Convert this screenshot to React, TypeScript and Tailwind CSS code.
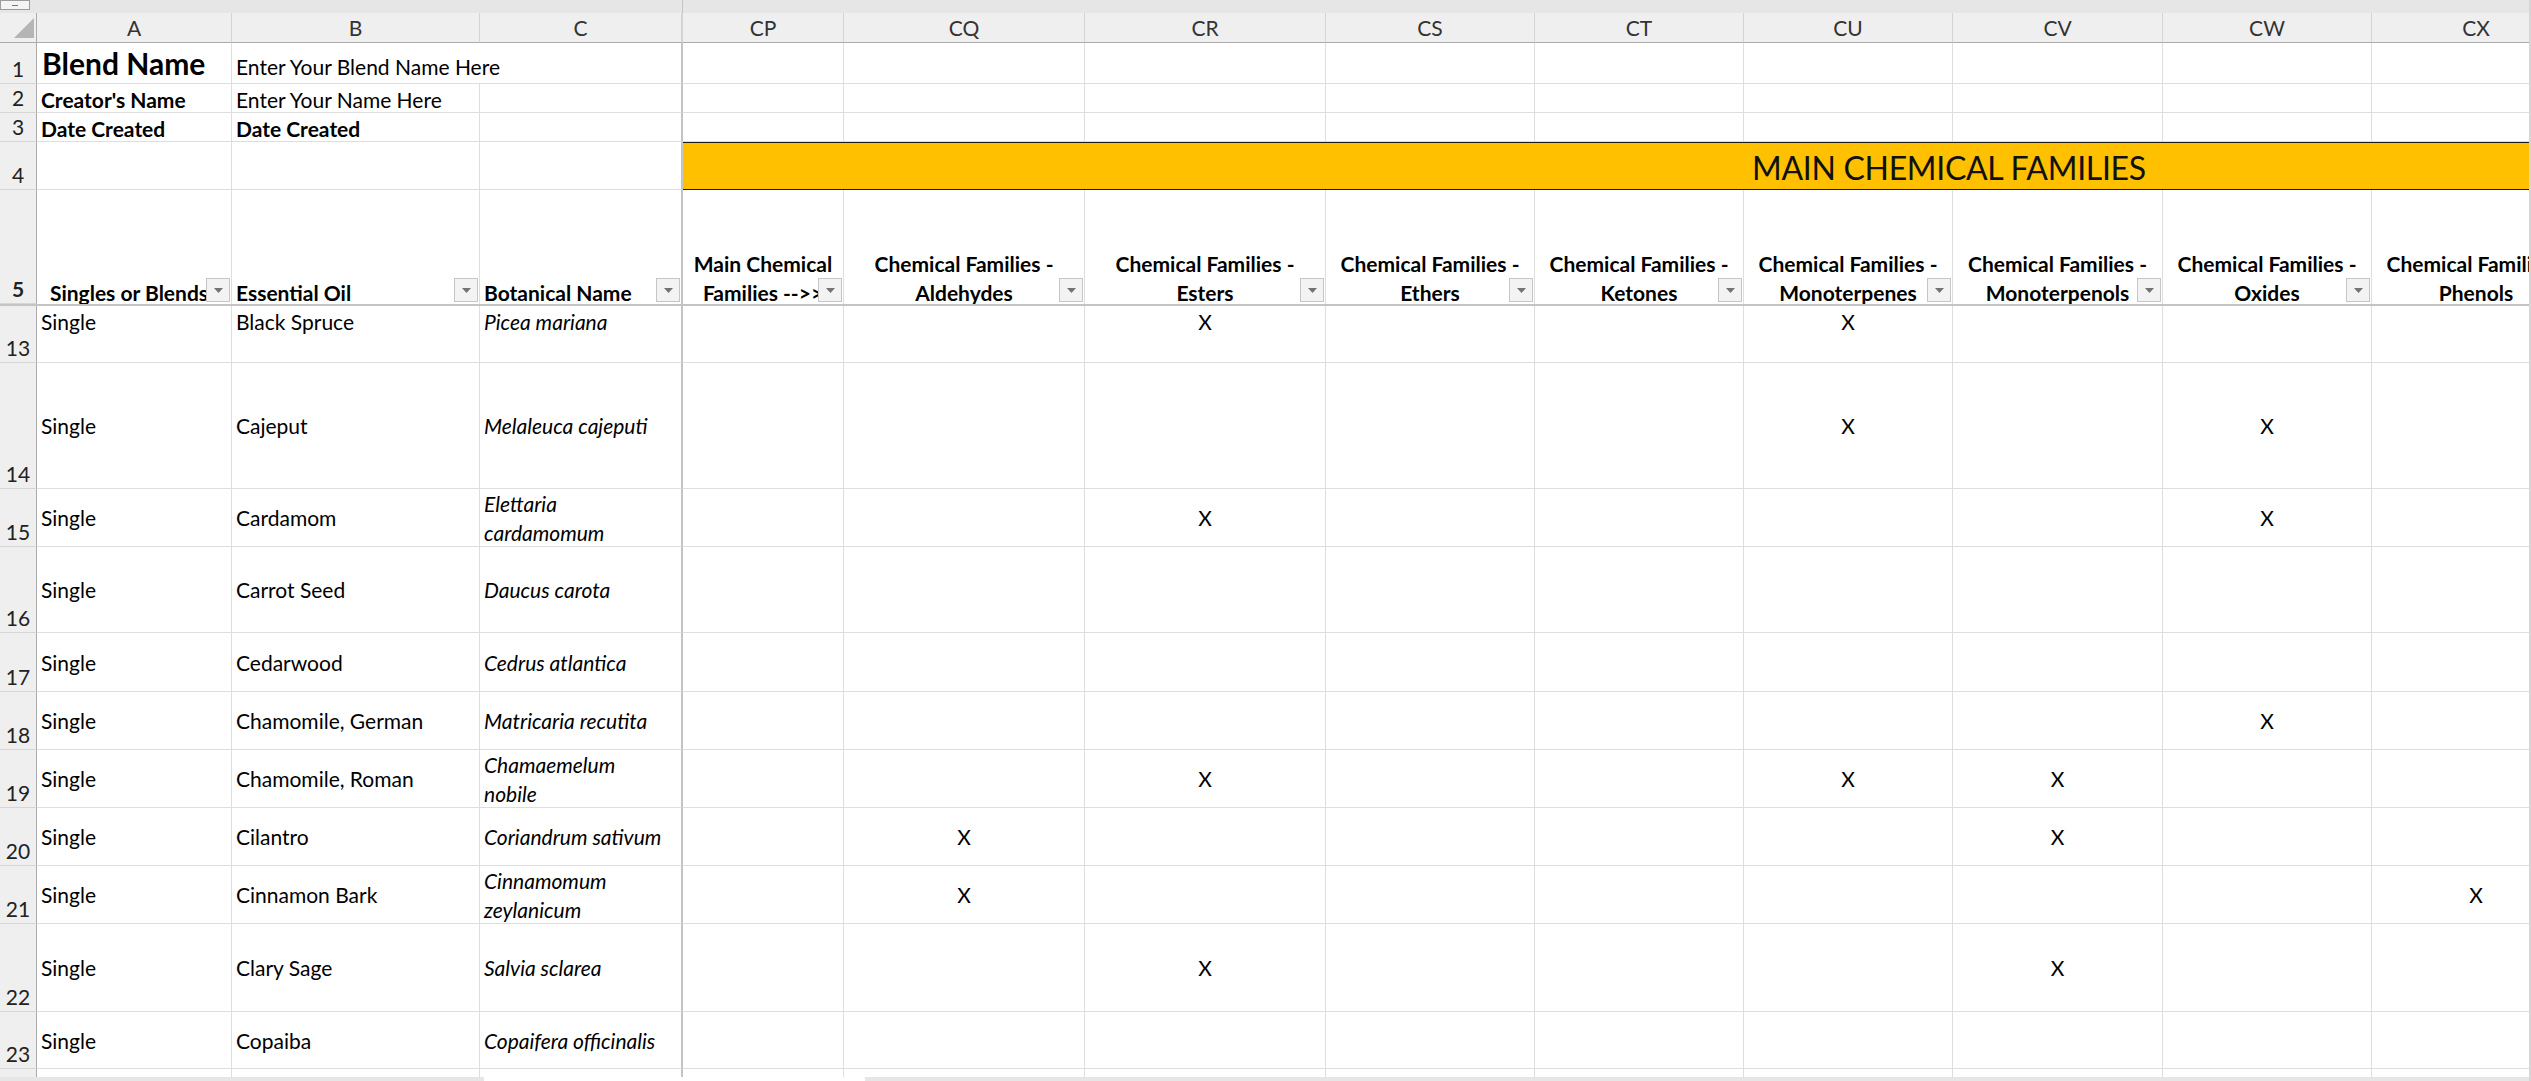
import React from 'react'

type Col = { id: string; w: string }

const LEFT: Col[] = [
  { id: 'A', w: 'w-[195px]' },
  { id: 'B', w: 'w-[248px]' },
  { id: 'C', w: 'w-[203px]' },
]

const RIGHT: Col[] = [
  { id: 'CP', w: 'w-[161px]' },
  { id: 'CQ', w: 'w-[241px]' },
  { id: 'CR', w: 'w-[241px]' },
  { id: 'CS', w: 'w-[209px]' },
  { id: 'CT', w: 'w-[209px]' },
  { id: 'CU', w: 'w-[209px]' },
  { id: 'CV', w: 'w-[210px]' },
  { id: 'CW', w: 'w-[209px]' },
  { id: 'CX', w: 'w-[209px]' },
]

const HEADERS: Record<string, string[]> = {
  CP: ['Main Chemical', 'Families -->>'],
  CQ: ['Chemical Families -', 'Aldehydes'],
  CR: ['Chemical Families -', 'Esters'],
  CS: ['Chemical Families -', 'Ethers'],
  CT: ['Chemical Families -', 'Ketones'],
  CU: ['Chemical Families -', 'Monoterpenes'],
  CV: ['Chemical Families -', 'Monoterpenols'],
  CW: ['Chemical Families -', 'Oxides'],
  CX: ['Chemical Families -', 'Phenols'],
}

type Oil = { n: number; h: string; top?: boolean; oil: string; bot: string[]; x: string[] }

const OILS: Oil[] = [
  { n: 13, h: 'h-[57px]', top: true, oil: 'Black Spruce', bot: ['Picea mariana'], x: ['CR', 'CU'] },
  { n: 14, h: 'h-[126px]', oil: 'Cajeput', bot: ['Melaleuca cajeputi'], x: ['CU', 'CW'] },
  { n: 15, h: 'h-[58px]', oil: 'Cardamom', bot: ['Elettaria', 'cardamomum'], x: ['CR', 'CW'] },
  { n: 16, h: 'h-[86px]', oil: 'Carrot Seed', bot: ['Daucus carota'], x: [] },
  { n: 17, h: 'h-[59px]', oil: 'Cedarwood', bot: ['Cedrus atlantica'], x: [] },
  { n: 18, h: 'h-[58px]', oil: 'Chamomile, German', bot: ['Matricaria recutita'], x: ['CW'] },
  { n: 19, h: 'h-[58px]', oil: 'Chamomile, Roman', bot: ['Chamaemelum', 'nobile'], x: ['CR', 'CU', 'CV'] },
  { n: 20, h: 'h-[58px]', oil: 'Cilantro', bot: ['Coriandrum sativum'], x: ['CQ', 'CV'] },
  { n: 21, h: 'h-[58px]', oil: 'Cinnamon Bark', bot: ['Cinnamomum', 'zeylanicum'], x: ['CQ', 'CX'] },
  { n: 22, h: 'h-[88px]', oil: 'Clary Sage', bot: ['Salvia sclarea'], x: ['CR', 'CV'] },
  { n: 23, h: 'h-[57px]', oil: 'Copaiba', bot: ['Copaifera officinalis'], x: [] },
]

const grid = 'shrink-0 border-b border-r border-[#dedede]'
const freeze = 'border-r-2 border-r-[#c4c4c4]'

function RowNum({ n }: { n?: number }) {
  return (
    <div className="flex w-[37px] shrink-0 items-end justify-center border-b border-r border-b-[#d6d6d6] border-r-[#ababab] bg-[#efefef] text-[21px] leading-[29px] text-[#222]">
      {n}
    </div>
  )
}

function Filter() {
  return (
    <span className="absolute bottom-[2px] right-[1px] flex h-[24px] w-[24px] items-center justify-center border border-[#c6c6c6] bg-[#f3f3f3]">
      <svg width="9" height="5" viewBox="0 0 9 5">
        <path d="M0 0h9L4.5 5z" fill="#737373" />
      </svg>
    </span>
  )
}

function EmptyRight() {
  return (
    <>
      {RIGHT.map((c) => (
        <div key={c.id} className={`${grid} ${c.w}`} />
      ))}
    </>
  )
}

export default function App() {
  return (
    <div className="flex h-[1081px] w-full overflow-hidden bg-white font-['Lato',sans-serif] text-[21px] leading-[29px] text-black">
      <div className="flex w-[2529px] shrink-0 flex-col overflow-hidden">
        {/* outline strip */}
        <div className="flex h-[13px] shrink-0 bg-[#e6e6e6]">
          <div className="flex h-[10px] w-[30px] shrink-0 items-center justify-center border border-[#9c9c9c] bg-[#f4f4f4]">
            <div className="h-px w-[6px] bg-[#777]" />
          </div>
          <div className="w-[652px] shrink-0" />
          <div className="w-px bg-[#c4c4c4]" />
        </div>

        {/* column letters */}
        <div className="flex h-[30px] shrink-0 bg-[#efefef] text-[#333]">
          <div className="relative w-[37px] shrink-0 border-b border-r border-b-[#ababab] border-r-[#ababab]">
            <svg width="37" height="30" className="block">
              <polygon points="34,5 34,25 14,25" fill="#b5b5b5" />
            </svg>
          </div>
          {LEFT.map((c) => (
            <div
              key={c.id}
              className={`flex shrink-0 items-center justify-center border-b border-r border-b-[#ababab] border-r-[#d4d4d4] ${c.w} ${c.id === 'C' ? freeze : ''}`}
            >
              {c.id}
            </div>
          ))}
          {RIGHT.map((c) => (
            <div
              key={c.id}
              className={`flex shrink-0 items-center justify-center border-b border-r border-b-[#ababab] border-r-[#d4d4d4] ${c.w}`}
            >
              {c.id}
            </div>
          ))}
        </div>

        {/* row 1 */}
        <div className="flex h-[41px] shrink-0">
          <RowNum n={1} />
          <div className={`${grid} flex w-[195px] items-end px-[5px] pb-[2px] text-[30px] font-bold leading-[36px]`}>Blend Name</div>
          <div className={`flex w-[451px] shrink-0 items-end border-b border-[#dedede] px-[4px] pb-[2px] ${freeze}`}>
            Enter Your Blend Name Here
          </div>
          <EmptyRight />
        </div>

        {/* row 2 */}
        <div className="flex h-[29px] shrink-0">
          <RowNum n={2} />
          <div className={`${grid} flex w-[195px] items-end px-[4px] font-bold`}>
            <span className="translate-y-[2px]">Creator's Name</span>
          </div>
          <div className={`${grid} flex w-[248px] items-end px-[4px]`}>
            <span className="translate-y-[2px]">Enter Your Name Here</span>
          </div>
          <div className={`${grid} w-[203px] ${freeze}`} />
          <EmptyRight />
        </div>

        {/* row 3 */}
        <div className="flex h-[29px] shrink-0">
          <RowNum n={3} />
          <div className={`${grid} flex w-[195px] items-end px-[4px] font-bold`}>
            <span className="translate-y-[2px]">Date Created</span>
          </div>
          <div className={`${grid} flex w-[248px] items-end px-[4px] font-bold`}>
            <span className="translate-y-[2px]">Date Created</span>
          </div>
          <div className={`${grid} w-[203px] ${freeze}`} />
          <EmptyRight />
        </div>

        {/* row 4 with the banner */}
        <div className="flex h-[48px] shrink-0">
          <RowNum n={4} />
          <div className={`${grid} w-[195px]`} />
          <div className={`${grid} w-[248px]`} />
          <div className={`${grid} w-[203px] ${freeze}`} />
          <div className="flex w-[1898px] shrink-0 items-center border-y border-[#1a1a1a] bg-[#ffc000] pl-[1069px] pt-[3px] text-[32px] leading-[40px] tracking-[-0.3px] text-[#111]">
            MAIN CHEMICAL FAMILIES
          </div>
        </div>

        {/* row 5 headers */}
        <div className="flex h-[116px] shrink-0 border-b-2 border-[#c4c4c4] font-bold">
          <RowNum n={5} />
          <div className="relative flex w-[195px] shrink-0 items-end justify-center overflow-hidden border-r border-[#dedede] pr-[10px]">
            <span className="translate-y-[3px] whitespace-nowrap">Singles or Blends</span>
            <Filter />
          </div>
          <div className="relative flex w-[248px] shrink-0 items-end border-r border-[#dedede] px-[4px]">
            <span className="translate-y-[3px]">Essential Oil</span>
            <Filter />
          </div>
          <div className={`relative flex w-[203px] shrink-0 items-end px-[4px] ${freeze}`}>
            <span className="translate-y-[3px]">Botanical Name</span>
            <Filter />
          </div>
          {RIGHT.map((c) => (
            <div
              key={c.id}
              className={`relative flex shrink-0 flex-col items-center justify-end overflow-hidden border-r border-[#dedede] text-center ${c.w}`}
            >
              <div className="flex translate-y-[3px] flex-col items-center">
                {HEADERS[c.id].map((l) => (
                  <span key={l} className="whitespace-nowrap">
                    {l}
                  </span>
                ))}
              </div>
              <Filter />
            </div>
          ))}
        </div>

        {/* data rows */}
        {OILS.map((r) => {
          const al = r.top ? 'items-start pt-[1px]' : 'items-center'
          return (
            <div key={r.n} className={`flex shrink-0 ${r.h}`}>
              <RowNum n={r.n} />
              <div className={`${grid} flex w-[195px] px-[4px] ${al}`}>Single</div>
              <div className={`${grid} flex w-[248px] px-[4px] ${al}`}>{r.oil}</div>
              <div className={`${grid} flex w-[203px] px-[4px] italic ${al} ${freeze}`}>
                <div>
                  {r.bot.map((l) => (
                    <div key={l} className="whitespace-nowrap">
                      {l}
                    </div>
                  ))}
                </div>
              </div>
              {RIGHT.map((c) => (
                <div key={c.id} className={`${grid} flex justify-center ${c.w} ${al}`}>
                  {r.x.includes(c.id) ? 'X' : ''}
                </div>
              ))}
            </div>
          )
        })}

        {/* partly visible row 24 */}
        <div className="flex h-[8px] shrink-0 overflow-hidden">
          <div className="w-[37px] shrink-0 border-r border-[#ababab] bg-[#efefef]" />
          <div className="w-[195px] shrink-0 border-r border-[#dedede]" />
          <div className="w-[248px] shrink-0 border-r border-[#dedede]" />
          <div className={`w-[203px] shrink-0 ${freeze}`} />
          {RIGHT.map((c) => (
            <div key={c.id} className={`shrink-0 border-r border-[#dedede] ${c.w}`} />
          ))}
        </div>

        {/* bottom bar */}
        <div className="flex h-[4px] shrink-0">
          <div className="w-[484px] shrink-0 bg-[#e6e6e6]" />
          <div className="w-[381px] shrink-0 bg-white" />
          <div className="flex-1 bg-[#e6e6e6]" />
        </div>
      </div>
      <div className="w-[2px] shrink-0 bg-[#d6d6d6]" />
    </div>
  )
}
